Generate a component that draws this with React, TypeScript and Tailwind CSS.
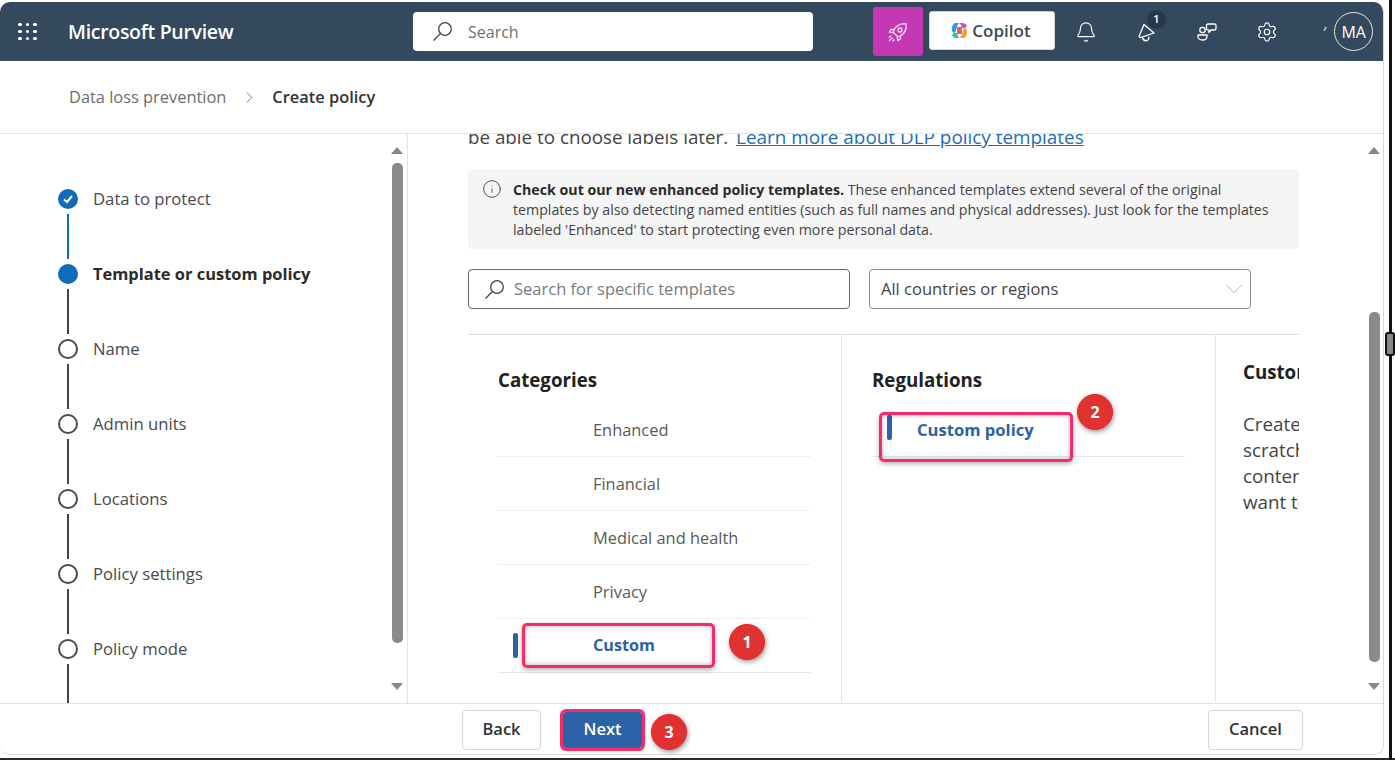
import { Bell, ChevronDown, ChevronRight, Info, Settings } from 'lucide-react';

const steps = [
  { label: 'Data to protect', state: 'done' },
  { label: 'Template or custom policy', state: 'current' },
  { label: 'Name', state: 'todo' },
  { label: 'Admin units', state: 'todo' },
  { label: 'Locations', state: 'todo' },
  { label: 'Policy settings', state: 'todo' },
  { label: 'Policy mode', state: 'todo' },
];

const categories = ['Enhanced', 'Financial', 'Medical and health', 'Privacy'];

function Scrollbar({ thumbClass }: { thumbClass: string }) {
  return (
    <div className="w-[12px] shrink-0 flex flex-col items-center">
      <div className="mt-[13px] h-0 w-0 border-x-[6px] border-b-[7px] border-x-transparent border-b-[#8a8886]" />
      <div className={`w-[11px] rounded-[5px] bg-[#8b898c] ${thumbClass}`} />
      <div className="mt-auto mb-[13px] h-0 w-0 border-x-[6px] border-t-[7px] border-x-transparent border-t-[#8a8886]" />
    </div>
  );
}

function Marker({ n, className }: { n: number; className: string }) {
  return (
    <div className={`absolute flex h-[36px] w-[36px] items-center justify-center rounded-full border border-[#f02020] bg-[#e13232] text-[16px] font-bold text-white shadow-[1px_2px_5px_rgba(0,0,0,0.4)] ${className}`}>
      {n}
    </div>
  );
}

function SearchGlyph({ className }: { className: string }) {
  return (
    <svg width="21" height="21" viewBox="0 0 21 21" fill="none" stroke="currentColor" strokeWidth="1.3" className={className}>
      <circle cx="13" cy="8" r="6.3" />
      <path d="M8.500 12.500 1.500 19.500" />
    </svg>
  );
}

function RocketGlyph() {
  return (
    <svg width="22" height="22" viewBox="0 0 22 22" fill="none" stroke="#f6dff3" strokeWidth="1.3">
      <path d="M19 3c-5-.8-9 1-11.500 5L6 11l5 5 3-1.500C18 12 19.800 8 19 3z" />
      <circle cx="13" cy="9" r="2" />
      <path d="M7.500 8.500H4L2.500 11 6 12M13.500 14.500V18L11 19.500 10 16M2 20l3.500-3.500M2 16.500l2-2M5.500 20.500l2-2" />
    </svg>
  );
}

function CopilotLogo() {
  return (
    <svg width="17" height="17" viewBox="0 0 17 17">
      <path d="M8.500 1H5C2.800 1 1 3 1 6v2c0 1.800 1.200 3 3 3l2-6c.4-1.800 1.200-3.200 2.500-4z" fill="#2f9be8" />
      <path d="M8.500 16H12c2.200 0 4-2 4-5V9c0-1.800-1.200-3-3-3l-2 6c-.4 1.800-1.200 3.200-2.500 4z" fill="#f2a12e" />
      <path d="M4 11c-1.800 0-3 .8-2.600 2.400C1.800 15 3.500 16 6 16h2.500C7 15 6.500 13 6.500 11z" fill="#45c27c" />
      <path d="M13 6c1.800 0 3-.8 2.600-2.400C15.200 2 13.500 1 11 1H8.500C10 2 10.500 4 10.500 6z" fill="#cf52c2" />
      <path d="M6 5h5l-.2 1L11 12H6z" fill="#ea5a6c" />
    </svg>
  );
}

function MegaphoneGlyph() {
  return (
    <svg width="20" height="20" viewBox="0 0 20 20" fill="none" stroke="currentColor" strokeWidth="1.3" strokeLinejoin="round">
      <path d="M2 14.500 7 2.500l10 8.500-13.500 4.700z" />
      <path d="M5.500 15.500c.5 2.500 2 3.500 4 3.200 1.800-.3 2.700-1.800 2.300-4" />
    </svg>
  );
}

function PeopleChatGlyph() {
  return (
    <svg width="20" height="20" viewBox="0 0 20 20" fill="none" stroke="currentColor" strokeWidth="1.3" strokeLinejoin="round">
      <circle cx="5.500" cy="8" r="2.700" />
      <path d="M1 13h9v1.500c0 2-1.800 3.500-4.500 3.500S1 16.500 1 14.500z" />
      <path d="M11 2h6.500c.8 0 1.500.7 1.500 1.500v3c0 .8-.7 1.500-1.500 1.500H14l-2 2.500V8h-1c-.8 0-1.500-.7-1.500-1.500v-3C9.500 2.700 10.200 2 11 2z" />
    </svg>
  );
}

export default function App() {
  return (
    <div className="relative h-[760px] w-[1395px] overflow-hidden bg-white font-['Open_Sans',sans-serif]">
      <div className="mt-[2px] flex h-[753px] w-[1384px] flex-col overflow-hidden rounded-b-[10px] rounded-t-[10px] border-r border-b border-[#d8d8d8]">
        {/* top bar */}
        <header className="flex h-[59px] shrink-0 items-center bg-[#34495d] text-white">
          <div className="ml-[18px] grid w-[19px] grid-cols-3 gap-[3.500px]">
            {Array.from({ length: 9 }).map((_, i) => (
              <span key={i} className="h-[3.500px] w-[3.500px] rounded-full bg-white" />
            ))}
          </div>
          <div className="ml-[31px] w-[345px] text-[19.500px] font-semibold tracking-[-0.3px]">Microsoft Purview</div>
          <div className="flex h-[39px] w-[400px] items-center rounded-[4px] bg-white pl-[19px] text-[16px] text-[#707070]">
            <SearchGlyph className="text-[#444]" />
            <span className="ml-[15px]">Search</span>
          </div>
          <div className="ml-[60px] flex h-[49px] w-[50px] items-center justify-center rounded-[3px] bg-[#c637b5]">
            <RocketGlyph />
          </div>
          <div className="ml-[6px] flex h-[39px] w-[126px] -translate-y-[1px] items-center justify-center gap-[4px] rounded-[3px] border border-[#d0d0d0] bg-white pr-[2px] text-[17px] font-semibold text-[#3d4a55]">
            <CopilotLogo />
            Copilot
          </div>
          <Bell size={22} strokeWidth={1.250} className="ml-[20px]" />
          <div className="relative ml-[40px]">
            <MegaphoneGlyph />
            <span className="absolute -right-[9px] -top-[12px] flex h-[19px] w-[19px] items-center justify-center rounded-full bg-[#27384a] text-[11px] font-semibold">1</span>
          </div>
          <div className="ml-[40px]">
            <PeopleChatGlyph />
          </div>
          <Settings size={22} strokeWidth={1.300} className="ml-[39px]" />
          <span className="ml-[45px] text-[14px] leading-none">′</span>
          <div className="ml-[8px] flex h-[39px] w-[39px] items-center justify-center rounded-full border border-[#dfe4e8] text-[16px] font-medium">MA</div>
        </header>

        {/* breadcrumb */}
        <div className="flex h-[73px] shrink-0 items-center border-b border-[#e3e3e3] pl-[69px] text-[16.400px]">
          <span className="text-[#6d6d6d]">Data loss prevention</span>
          <ChevronRight size={19} strokeWidth={1.200} className="ml-[14px] text-[#777]" />
          <span className="ml-[13px] font-semibold text-[#333]">Create policy</span>
        </div>

        <div className="flex min-h-0 flex-1">
          {/* wizard steps */}
          <aside className="flex w-[408px] shrink-0 border-r border-[#e3e3e3]">
            <div className="min-w-0 flex-1 overflow-hidden pl-[58px] pt-[55px]">
              {steps.map((s, i) => (
                <div key={s.label} className="flex h-[75px] gap-[15px]">
                  <div className="flex w-[20px] shrink-0 flex-col items-center">
                    {s.state === 'done' && (
                      <div className="flex h-[20px] w-[20px] items-center justify-center rounded-full bg-[#0f6cbd]">
                        <svg width="12" height="12" viewBox="0 0 12 12" fill="none" stroke="white" strokeWidth="2">
                          <path d="M2 6.500 5 9l5-6" />
                        </svg>
                      </div>
                    )}
                    {s.state === 'current' && <div className="h-[20px] w-[20px] rounded-full bg-[#0f6cbd]" />}
                    {s.state === 'todo' && <div className="h-[20px] w-[20px] rounded-full border-[2.500px] border-[#4a4a4a]" />}
                    <div className={`mt-[5px] h-[45px] w-[2px] ${i === 0 ? 'bg-[#0f6cbd]' : 'bg-[#444]'}`} />
                  </div>
                  <span className={`-mt-[2px] leading-[24px] ${s.state === 'current' ? 'text-[16.450px] font-bold text-[#2b2b2b]' : 'text-[16.700px] text-[#4a4a4a]'}`}>{s.label}</span>
                </div>
              ))}
            </div>
            <Scrollbar thumbClass="mt-[9px] h-[480px]" />
            <div className="w-[4px]" />
          </aside>

          {/* template picker */}
          <main className="relative flex min-w-0 flex-1">
            <div className="w-[60px] shrink-0" />
            <div className="min-w-0 w-[831px] shrink-0 overflow-hidden">
              <p className="-mt-[9px] whitespace-nowrap text-[18.800px] leading-[24px] text-[#444]">
                be able to choose labels later.{' '}
                <span className="ml-[3px] text-[18.900px] text-[#1f6db5] underline">Learn more about DLP policy templates</span>
              </p>
              <div className="mt-[20px] flex h-[80px] rounded-[4px] bg-[#f5f5f5] pl-[14px] pt-[11px]">
                <Info size={20} strokeWidth={1.200} className="-mt-[1px] shrink-0 text-[#555]" />
                <p className="ml-[11px] whitespace-nowrap text-[14.200px] leading-[20px] text-[#444]">
                  <b className="text-[#2b2b2b]">Check out our new enhanced policy templates.</b> These enhanced templates extend several of the original
                  <br />
                  templates by also detecting named entities (such as full names and physical addresses). Just look for the templates
                  <br />
                  labeled 'Enhanced' to start protecting even more personal data.
                </p>
              </div>
              <div className="mt-[20px] flex gap-[19px]">
                <div className="flex h-[40px] w-[382px] items-center rounded-[4px] border border-[#666] pl-[15px] text-[16.500px] text-[#7a7a7a]">
                  <SearchGlyph className="text-[#444]" />
                  <span className="ml-[9px]">Search for specific templates</span>
                </div>
                <div className="flex h-[40px] w-[382px] items-center justify-between rounded-[4px] border border-[#8a8a8a] pl-[11px] pr-[1px] text-[16.500px] text-[#444]">
                  All countries or regions
                  <ChevronDown size={30} strokeWidth={0.800} className="text-[#b5b5b5]" />
                </div>
              </div>
              <div className="mt-[25px] flex h-[368px] border-t border-[#dcdcdc]">
                <section className="w-[374px] shrink-0 border-r border-[#e6e6e6] pl-[30px] pr-[30px] pt-[31px]">
                  <h3 className="text-[18.700px] font-bold leading-[28px] text-[#222]">Categories</h3>
                  <ul className="mt-[9px]">
                    {categories.map((c) => (
                      <li key={c} className="flex h-[54px] items-start border-b border-[#f0f0f0] pl-[95px] pt-[15px] text-[16.400px] leading-[24px] text-[#5a5a5a]">{c}</li>
                    ))}
                    <li className="relative flex h-[54px] items-start border-b border-[#e8e8e8] pl-[95px] pt-[14px] text-[16.200px] font-bold leading-[24px] text-[#2b62a8]">
                      <span className="absolute left-[15px] top-[14px] h-[25px] w-[5px] rounded-[2px] bg-[#2b62a8]" />
                      Custom
                    </li>
                  </ul>
                </section>
                <section className="w-[374px] shrink-0 border-r border-[#e6e6e6] pl-[30px] pr-[30px] pt-[31px]">
                  <h3 className="text-[18.700px] font-bold leading-[28px] text-[#222]">Regulations</h3>
                  <div className="relative mt-[9px] flex h-[54px] items-start border-b border-[#e8e8e8] pl-[45px] pt-[15px] text-[16.600px] font-bold leading-[24px] text-[#2b62a8]">
                    <span className="absolute left-[15px] top-[12px] h-[25px] w-[5px] rounded-[2px] bg-[#2b62a8]" />
                    Custom policy
                  </div>
                </section>
                <section className="min-w-0 flex-1 pl-[27px] pt-[23px]">
                  <h3 className="whitespace-nowrap text-[18.700px] font-bold leading-[28px] text-[#222]">Custom policy</h3>
                  <p className="mt-[25px] whitespace-nowrap text-[18.800px] leading-[26px] text-[#444]">
                    Create
                    <br />
                    scratch
                    <br />
                    content
                    <br />
                    want to
                  </p>
                </section>
              </div>
            </div>
            <div className="flex-1" />
            <div className="mr-[3px] flex">
              <Scrollbar thumbClass="mt-[158px] h-[350px]" />
            </div>
          </main>
        </div>

        {/* wizard footer */}
        <footer className="flex h-[51px] shrink-0 items-center border-t border-[#e3e3e3] bg-white pt-[1px] pl-[462px]">
          <button className="h-[40px] w-[79px] rounded-[4px] border border-[#d6d6d6] text-[16.500px] font-semibold text-[#333]">Back</button>
          <button className="ml-[22px] h-[36px] w-[79px] rounded-[3px] bg-[#2b62a8] text-[16.500px] font-semibold text-white outline-[3px] outline-[#f52c68] outline-offset-0 shadow-[0_1px_4px_rgba(0,0,0,0.3)]">Next</button>
          <button className="ml-[566px] h-[40px] w-[95px] rounded-[4px] border border-[#d6d6d6] text-[16.500px] font-semibold text-[#333]">Cancel</button>
        </footer>
      </div>

      {/* annotations painted on the screenshot */}
      <div className="absolute left-[522px] top-[623px] h-[45px] w-[193px] rounded-[5px] border-[3px] border-[#f52c68] shadow-[0_2px_5px_rgba(0,0,0,0.3),inset_0_0_5px_rgba(0,0,0,0.3)]" />
      <div className="absolute left-[879px] top-[412px] h-[50px] w-[194px] rounded-[5px] border-[3px] border-[#f52c68] shadow-[0_2px_5px_rgba(0,0,0,0.3),inset_0_0_5px_rgba(0,0,0,0.3)]" />
      <Marker n={1} className="left-[729px] top-[624px]" />
      <Marker n={2} className="left-[1077px] top-[394px]" />
      <Marker n={3} className="left-[651px] top-[714px]" />

      {/* dark desktop edge behind the captured window */}
      <div className="absolute bottom-0 left-0 h-[2px] w-full bg-[#2a2a2a]" />
      <div className="absolute bottom-0 left-[1389px] top-0 w-[3px] bg-[#111]" />
      <div className="absolute left-[1385px] top-[332px] h-[24px] w-[10px] rounded-[3px] border-2 border-[#111] bg-[#888]" />
    </div>
  );
}
